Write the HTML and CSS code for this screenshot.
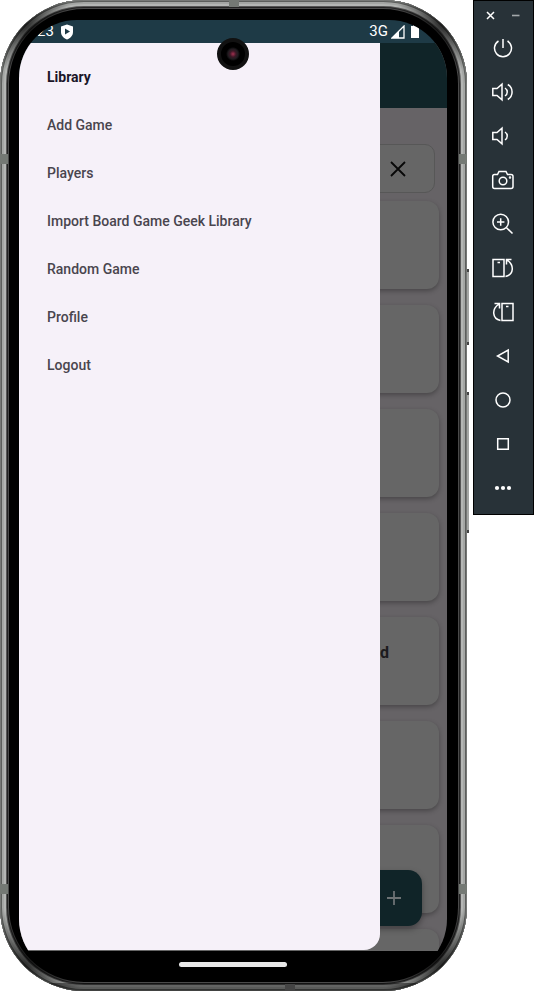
FILE: index.html
```html
<!DOCTYPE html>
<html lang="en">
<head>
<meta charset="utf-8">
<meta name="viewport" content="width=device-width, initial-scale=1">
<title>Library</title>
<link rel="stylesheet" href="styles.css">
</head>
<body>
<div class="emulator">
  <div class="phone">
    <span class="side-key side-key-power"></span>
    <span class="side-key side-key-volume"></span>
    <div class="frame">
      <span class="band band-top"></span>
      <span class="band band-bottom"></span>
      <span class="band band-left band-upper"></span>
      <span class="band band-left band-lower"></span>
      <span class="band band-right band-upper"></span>
      <span class="band band-right band-lower"></span>
      <div class="screen">
        <header class="status">
          <span class="time">23</span>
          <svg class="shield" width="12" height="16" viewBox="0 0 12 16"><path d="M6 0.500L12 2.500V8C12 11.500 9.500 14 6 15.500C2.500 14 0 11.500 0 8V2.500Z" fill="#fff"/><path d="M4 4.500L9 7.500L4 10.500Z" fill="#1e3a46"/></svg>
          <span class="network">3G</span>
          <svg width="14" height="14" viewBox="0 0 14 14"><path d="M1 13L13 1V13Z" fill="none" stroke="#fff" stroke-width="1.300"/><path d="M1 13L8 6V13Z" fill="#fff"/></svg>
          <svg class="battery" width="8" height="13" viewBox="0 0 8 13"><path d="M2 0H6V1H8V13H0V1H2Z" fill="#fff"/></svg>
        </header>
        <div class="app">
          <div class="app-bar"></div>
          <main class="content">
            <div class="search">
              <button class="clear" aria-label="Clear"><svg width="16" height="16" viewBox="0 0 16 16"><path d="M1 1L15 15M15 1L1 15" stroke="#080808" stroke-width="1.800"/></svg></button>
            </div>
            <div class="cards">
              <article class="card"></article>
              <article class="card"></article>
              <article class="card"></article>
              <article class="card"></article>
              <article class="card"><h2 class="card-title">d</h2></article>
              <article class="card"></article>
              <article class="card"></article>
              <article class="card"></article>
            </div>
          </main>
          <button class="fab" aria-label="Add"><svg width="16" height="16" viewBox="0 0 16 16"><path d="M8 1V15M1 8H15" stroke="#6d7274" stroke-width="1.800"/></svg></button>
          <nav class="drawer">
            <a class="item current" href="#">Library</a>
            <a class="item" href="#">Add Game</a>
            <a class="item" href="#">Players</a>
            <a class="item" href="#">Import Board Game Geek Library</a>
            <a class="item" href="#">Random Game</a>
            <a class="item" href="#">Profile</a>
            <a class="item" href="#">Logout</a>
          </nav>
        </div>
        <footer class="gesture"><span class="pill"></span></footer>
      </div>
      <span class="camera"></span>
    </div>
  </div>
  <aside class="tools">
    <div class="window-keys">
      <button aria-label="Close"><svg width="9" height="9" viewBox="0 0 9 9"><path d="M1 1L8 8M8 1L1 8" stroke-width="1.500"/></svg></button>
      <button aria-label="Minimize"><svg width="9" height="9" viewBox="0 0 9 9"><path d="M1 4.500H8.500" stroke="#a3a8ab" stroke-width="1.600"/></svg></button>
    </div>
    <button class="tool" aria-label="Power"><svg width="24" height="24" viewBox="0 0 24 24"><path d="M12 3V12M7.500 5A8.500 8.500 0 1 0 16.500 5"/></svg></button>
    <button class="tool" aria-label="Volume up"><svg width="24" height="24" viewBox="0 0 24 24"><path d="M1.800 8.500H6L11 4.200V19.800L6 15.500H1.800ZM14 8C17 10 17 14 14 16M16.800 4.500C22.500 8 22.500 16 16.800 19.500"/></svg></button>
    <button class="tool" aria-label="Volume down"><svg width="24" height="24" viewBox="0 0 24 24"><path d="M1.800 8.500H6L11 4.200V19.800L6 15.500H1.800ZM14 8C17 10 17 14 14 16"/></svg></button>
    <button class="tool" aria-label="Screenshot"><svg width="24" height="24" viewBox="0 0 24 24"><path d="M3.500 6.500H6.500L8 3.500H15L16.500 6.500H20Q22 6.500 22 8.500V18.500Q22 20.500 20 20.500H3.500Q1.700 20.500 1.700 18.500V8.500Q1.700 6.500 3.500 6.500Z"/><circle cx="12" cy="13" r="3.800"/><circle cx="19" cy="9.500" r="0.500"/></svg></button>
    <button class="tool" aria-label="Zoom"><svg width="24" height="24" viewBox="0 0 24 24"><circle cx="9.700" cy="10" r="7.800"/><path d="M15.500 15.700L21.500 21.500M9.700 6.300V13.700M6 10H13.400"/></svg></button>
    <button class="tool" aria-label="Rotate left"><svg width="24" height="24" viewBox="0 0 24 24"><path d="M2 3.500H13V20.500H2ZM6.500 6.500H9M14.500 20.500C23 18.500 23.500 9 16 4M20.500 3.500H15.500V8.500"/></svg></button>
    <button class="tool" aria-label="Rotate right"><svg width="24" height="24" viewBox="0 0 24 24"><path d="M11 3.500H22V20.500H11ZM15 6.500H17.500M9.500 20.500C1 18.500 0.500 9 8 4M3.500 3.500H8.500V8.500"/></svg></button>
    <button class="tool" aria-label="Back"><svg width="24" height="24" viewBox="0 0 24 24"><path d="M17.200 6V18L6.500 12Z"/></svg></button>
    <button class="tool" aria-label="Home"><svg width="24" height="24" viewBox="0 0 24 24"><circle cx="12" cy="12" r="7"/></svg></button>
    <button class="tool" aria-label="Overview"><svg width="24" height="24" viewBox="0 0 24 24"><path d="M6.700 6.700H17.300V17.300H6.700Z"/></svg></button>
    <button class="tool" aria-label="More"><svg width="24" height="24" viewBox="0 0 24 24"><g fill="#fff" stroke="none"><circle cx="6" cy="12" r="2.100"/><circle cx="12" cy="12" r="2.100"/><circle cx="18" cy="12" r="2.100"/></g></svg></button>
  </aside>
</div>
</body>
</html>
```
FILE: styles.css
```css
* {
  box-sizing: border-box;
}

body {
  margin: 0;
  background: #fff;
  font-family: Roboto, "Liberation Sans", sans-serif;
}

button {
  display: flex;
  align-items: center;
  justify-content: center;
  padding: 0;
  border: 0;
  background: none;
}

svg {
  display: block;
}

.emulator {
  display: flex;
  align-items: flex-start;
  gap: 6px;
}

/* Phone body */
.phone {
  position: relative;
  flex: 1;
  min-width: 0;
}

.frame {
  position: relative;
  display: flex;
  height: 100vh;
  min-height: 600px;
  padding: 20px 20px 14px 19px;
  overflow: hidden;
  border-radius: 84px;
  background: #000;
  box-shadow:
    inset 0 0 0 1px #767876,
    inset 0 0 0 2px #5c5e5c,
    inset 0 0 0 4px #a4a6a4,
    inset 0 0 0 6px #b4b6b4,
    inset 0 0 0 7px #555,
    inset 0 0 0 8px #222,
    inset 0 0 0 9px #4a4a4a;
}

/* Dark reflections where the metal bends */
.frame::before {
  content: "";
  position: absolute;
  inset: 0;
  background:
    radial-gradient(circle at 24px 24px, rgba(0, 0, 0, 0.75), transparent 50px),
    radial-gradient(circle at calc(100% - 24px) 24px, rgba(0, 0, 0, 0.75), transparent 50px),
    radial-gradient(circle at 24px calc(100% - 24px), rgba(0, 0, 0, 0.75), transparent 60px),
    radial-gradient(circle at calc(100% - 24px) calc(100% - 24px), rgba(0, 0, 0, 0.75), transparent 60px),
    linear-gradient(transparent calc(100% - 8px), rgba(0, 0, 0, 0.45) calc(100% - 8px));
}

.band {
  position: absolute;
  width: 8px;
  height: 10px;
  background: #747974;
}

.band-top,
.band-bottom {
  width: 10px;
  height: 7px;
}

.band-top {
  top: 0;
  left: calc(50% - 5px);
}

.band-bottom {
  bottom: 0;
  left: 61%;
  background: #444;
}

.band-left {
  left: 0;
}

.band-right {
  right: 0;
}

.band-upper {
  top: 154px;
}

.band-lower {
  bottom: 97px;
}

.side-key {
  position: absolute;
  right: -2px;
  width: 4px;
  border: solid #444;
  border-width: 3px 0;
  background: #a4a6a4;
}

.side-key-power {
  top: 269px;
  height: 76px;
}

.side-key-volume {
  top: 392px;
  height: 141px;
}

.camera {
  position: absolute;
  top: 38px;
  left: calc(50% - 17px);
  width: 32px;
  height: 32px;
  border: 4px solid #111;
  border-radius: 50%;
  background: radial-gradient(circle, #a33050 0, #3c1826 3px, #201c20 5px, #000 7px);
}

/* Screen */
.screen {
  position: relative;
  display: flex;
  flex: 1;
  flex-direction: column;
  min-width: 0;
  overflow: hidden;
  border-radius: 58px;
  background: #000;
}

.status {
  display: flex;
  flex: none;
  align-items: center;
  height: 23px;
  padding: 0 28px 0 18px;
  background: #1e3a46;
  color: #fff;
  font-size: 15px;
  line-height: 23px;
}

.shield {
  margin-left: 7px;
}

.network {
  margin-right: 3px;
  margin-left: auto;
}

.battery {
  margin-left: 6px;
}

.app {
  position: relative;
  display: flex;
  flex: 1;
  flex-direction: column;
  min-height: 0;
  overflow: hidden;
  background: #666366;
}

.app-bar {
  flex: none;
  height: 65px;
  background: #102428;
}

.content {
  flex: 1;
  min-height: 0;
  padding: 36px 8px 0;
}

.search {
  display: flex;
  align-items: center;
  justify-content: flex-end;
  height: 49px;
  margin: 0 4px 8px;
  padding-right: 20px;
  border: 1px solid #575757;
  border-radius: 10px;
  background: #666;
}

.clear {
  width: 32px;
  height: 32px;
}

.cards {
  display: flex;
  flex-direction: column;
  gap: 16px;
}

.card {
  flex: none;
  height: 88px;
  padding: 26px 50px 0 16px;
  border-radius: 12px;
  background: #666;
  box-shadow: 0 2px 5px rgba(0, 0, 0, 0.3);
}

.card-title {
  margin: 0;
  color: #1c1b1d;
  font-size: 16px;
  font-weight: 700;
  line-height: 20px;
  text-align: right;
}

.fab {
  position: absolute;
  right: 25px;
  bottom: 25px;
  width: 56px;
  height: 56px;
  border-radius: 14px;
  background: #102428;
  box-shadow: 0 3px 6px rgba(0, 0, 0, 0.35);
}

.drawer {
  position: absolute;
  top: 0;
  bottom: 1px;
  left: 0;
  width: 361px;
  max-width: 85%;
  padding-top: 10px;
  border-radius: 0 0 16px 0;
  background: #f6f1f9;
}

.item {
  display: block;
  padding-left: 28px;
  color: #49454e;
  font-size: 14px;
  font-weight: 500;
  line-height: 48px;
  text-decoration: none;
}

.current {
  color: #1a1528;
  font-weight: 700;
}

.gesture {
  display: flex;
  flex: none;
  align-items: center;
  justify-content: center;
  height: 26px;
}

.pill {
  width: 108px;
  height: 5px;
  border-radius: 3px;
  background: #e8e8e8;
}

/* Emulator toolbar */
.tools {
  flex: none;
  width: 61px;
  padding: 0 2px 4px 0;
  border: 1px solid #000;
  background: #283238;
}

.tools svg {
  fill: none;
  stroke: #fff;
  stroke-width: 1.5px;
}

.window-keys {
  display: flex;
  justify-content: center;
  gap: 16px;
  height: 25px;
  padding-top: 3px;
}

.tool {
  width: 100%;
  height: 44px;
}
```
